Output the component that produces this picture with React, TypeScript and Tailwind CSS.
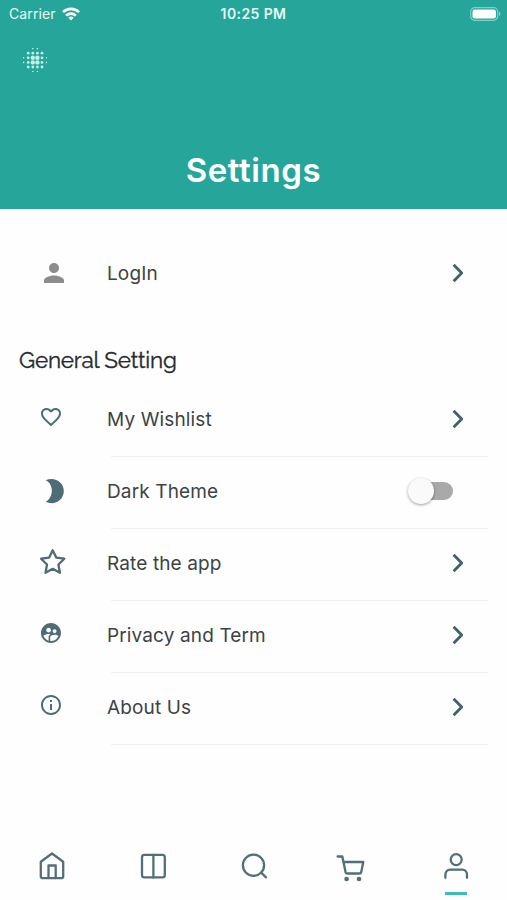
import { useState } from 'react'
import type { ReactNode } from 'react'
import { MdFavoriteBorder, MdInfoOutline, MdPerson, MdSupervisedUserCircle } from 'react-icons/md'

// Logo dots: column, row, radius
const LOGO_DOTS: [number, number, number][] = []
const DOT_SIZES = [
  [0, 0, 0.8, 0.8, 0, 0],
  [0, 1.4, 1.4, 1.4, 1.4, 0],
  [0.8, 1.4, 2.2, 2.2, 1.4, 0.8],
  [0.8, 1.4, 2.2, 2.2, 1.4, 0.8],
  [0, 1.4, 1.4, 1.4, 1.4, 0],
  [0, 0, 0.8, 0.8, 0, 0],
]
DOT_SIZES.forEach((row, y) => row.forEach((r, x) => r > 0 && LOGO_DOTS.push([x, y, r])))

function Logo() {
  return (
    <svg className="ml-[23px] mt-5 h-6 w-6" viewBox="0 0 24 24" fill="#c4f0e8">
      {LOGO_DOTS.map(([x, y, r]) => (
        <circle key={`${x}-${y}`} cx={0.6 + x * 4.6} cy={0.6 + y * 4.6} r={r} />
      ))}
    </svg>
  )
}

function StatusBar() {
  return (
    <div className="grid h-7 grid-cols-3 items-center text-[14px] leading-7 text-[#e4fbf6]">
      <div className="flex items-center gap-1.5 pl-[9px]">
        <span className="tracking-[0.1px]">Carrier</span>
        <svg className="h-[14px] w-[18px]" viewBox="0 0 18 14" fill="none" stroke="white" strokeWidth="2.6">
          <path d="M1 5.1a11.6 11.6 0 0 1 16 0" />
          <path d="M4.1 8.6a7.1 7.1 0 0 1 9.8 0" />
          <path d="M6.4 10.8a3.8 3.8 0 0 1 5.2 0L9 13.6z" fill="white" stroke="none" />
        </svg>
      </div>
      <span className="text-center text-[14px] font-semibold tracking-[0.4px]">10:25 PM</span>
      <svg className="mr-[6px] h-[14px] w-[31px] justify-self-end" viewBox="0 0 31 14">
        <rect x="0.7" y="0.7" width="27" height="12.6" rx="4" fill="none" stroke="#83cfc5" strokeWidth="1.2" />
        <rect x="2.5" y="2.5" width="23.4" height="9" rx="2.2" fill="white" />
        <path d="M29 4.8a2.4 2.4 0 0 1 0 4.4z" fill="#83cfc5" />
      </svg>
    </div>
  )
}

function Chevron() {
  return (
    <svg className="mb-[3px] h-5 w-3" viewBox="0 0 12 20" fill="none" stroke="#42636c" strokeWidth="2.9">
      <path d="M1.6 1.8 9.700 10l-8.100 8.200" strokeLinejoin="round" />
    </svg>
  )
}

function Moon() {
  return (
    <svg className="mb-[3px] ml-[6px] h-[26px] w-5" viewBox="0 0 20 26" fill="#4d6c76">
      <path d="M.6 2.200C8.600 5.500 9.200 19 .6 23.800 9.500 28 18.800 22 18.800 13S9.500-1.800.6 2.200z" />
    </svg>
  )
}

function Star() {
  return (
    <svg className="mb-[5px] h-7 w-7" viewBox="0 0 28 28" fill="none" stroke="#4d6c76" strokeWidth="2.3" strokeLinejoin="round">
      <path d="M13.700 2.200l3.500 7.400 8.100 1.100-5.900 5.800 1.500 8.300-7.200-4-7.200 4 1.500-8.300-5.900-5.800 8.100-1.100z" />
    </svg>
  )
}

function Switch({ checked, onChange }: { checked: boolean; onChange: () => void }) {
  return (
    <button
      role="switch"
      aria-checked={checked}
      aria-label="Dark Theme"
      onClick={onChange}
      className={`mb-1 mr-[11px] flex h-[18px] w-[42px] items-center rounded-full ${checked ? 'justify-end bg-[#7fcfc5]' : 'bg-[#a9a9a9]'}`}
    >
      <span className="-ml-[3px] size-[26px] shrink-0 rounded-full bg-[#fafafa] shadow-[0_1px_3px_rgba(0,0,0,0.38)]" />
    </button>
  )
}

interface RowProps {
  icon: ReactNode
  label: string
  trailing?: ReactNode
  divider?: boolean
}

function Row({ icon, label, trailing = <Chevron />, divider = true }: RowProps) {
  return (
    <div className="flex h-[72px] flex-col pl-[39px]">
      <div className="flex flex-1 items-center pr-[43px]">
        <div className="flex w-[68px] text-[#4d6c76]">{icon}</div>
        <span className="flex-1 text-[19px] tracking-[0.13px] text-[#3d4245]">{label}</span>
        {trailing}
      </div>
      <div className={`ml-[72px] mr-[19px] h-px ${divider ? 'bg-[#f0f0f0]' : ''}`} />
    </div>
  )
}

function NavIcon({ children, active = false }: { children: ReactNode; active?: boolean }) {
  return (
    <button className="flex flex-col items-center">
      <svg
        className="size-8 overflow-visible"
        viewBox="0 0 32 32"
        fill="none"
        stroke="#526f78"
        strokeWidth="2.3"
        strokeLinecap="round"
        strokeLinejoin="round"
      >
        {children}
      </svg>
      {active && <span className="mt-[10px] h-[3px] w-[22px] bg-[#3dbdb4]" />}
    </button>
  )
}

function BottomNav() {
  return (
    <nav className="grid h-[50px] grid-cols-5 items-start pl-px">
      <NavIcon>
        <path d="M4.800 11.700 16 3.500l11.200 8.200v14.500a2 2 0 0 1-2 2H6.800a2 2 0 0 1-2-2z" />
        <path d="M12.500 28V15.500h7.200V28" />
      </NavIcon>
      <NavIcon>
        <rect x="5" y="4.800" width="22.800" height="22.600" rx="2.400" />
        <path d="M16.400 4.800v22.600" />
      </NavIcon>
      <NavIcon>
        <circle cx="15.500" cy="15.200" r="10.600" />
        <path d="M23.200 22.600l4.800 4.800" />
      </NavIcon>
      <NavIcon>
        <path d="M-1.400 6.500h4.700l3.200 15.200q.3 1.800 2 1.800h11.800q1.700 0 2-1.800l2-9.700H4.400" />
        <circle cx="7.600" cy="29" r="1.200" fill="#526f78" />
        <circle cx="20" cy="29" r="1.200" fill="#526f78" />
      </NavIcon>
      <NavIcon active>
        <circle cx="16.200" cy="9.600" r="5.500" />
        <path d="M5.400 27.800v-3.400a4.800 4.800 0 0 1 4.800-4.800h12a4.800 4.800 0 0 1 4.800 4.800v3.400" />
      </NavIcon>
    </nav>
  )
}

export default function App() {
  const [dark, setDark] = useState(false)

  return (
    <div className="flex h-[900px] w-full flex-col bg-[#fefefe] font-['Inter',sans-serif]">
      <header className="flex h-[209px] flex-col bg-[#26a69a]">
        <StatusBar />
        <Logo />
        <h1 className="mt-auto pb-[15px] text-center text-[33px] font-semibold leading-[48px] tracking-[0.6px] text-white">
          Settings
        </h1>
      </header>

      <main className="flex-1 pt-[30px]">
        <Row icon={<MdPerson className="mb-[3px] size-[30px] text-[#8c8c8c]" />} label="LogIn" divider={false} />
        <h2 className="mb-[9px] mt-[33px] pl-[19px] font-['Raleway','Lato',sans-serif] text-[22.5px] leading-8 tracking-[-0.2px] text-[#262b2e] [-webkit-text-stroke:0.35px_#262b2e]">
          General Setting
        </h2>
        <Row icon={<MdFavoriteBorder className="mb-2 size-6" />} label="My Wishlist" />
        <Row icon={<Moon />} label="Dark Theme" trailing={<Switch checked={dark} onChange={() => setDark(!dark)} />} />
        <Row icon={<Star />} label="Rate the app" />
        <Row icon={<MdSupervisedUserCircle className="mb-2 size-6" />} label="Privacy and Term" />
        <Row icon={<MdInfoOutline className="mb-2 size-6" />} label="About Us" />
      </main>

      <BottomNav />
    </div>
  )
}
